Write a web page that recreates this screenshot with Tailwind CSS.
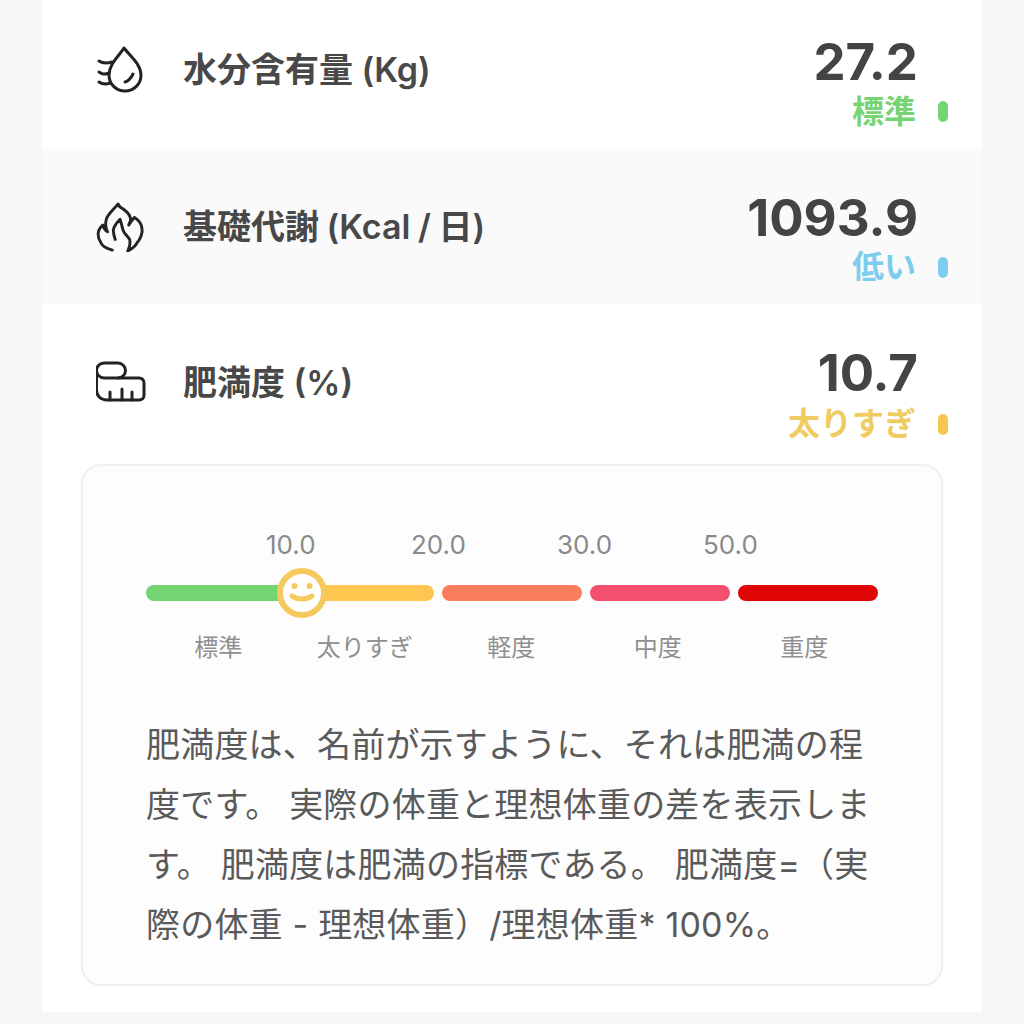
<!DOCTYPE html>
<html lang="ja">
<head>
<meta charset="utf-8">
<script src="https://cdn.jsdelivr.net/npm/@tailwindcss/browser@4"></script>
</head>
<body class="m-0 bg-[#f7f7f7]">
<div class="w-[1024px] h-[1024px] overflow-hidden bg-[#f7f7f7] px-[42px] font-['Inter','Noto_Sans_CJK_JP',sans-serif] text-[#484848]">
  <div class="w-[940px] h-[148px] bg-white flex justify-between pl-[54px] pr-[65px]">
    <div class="flex items-center gap-[37px] h-[140px]">
      <svg class="w-[50px] h-[50px]" viewBox="0 0 50 50" fill="none" stroke="#222" stroke-width="3" stroke-linecap="round" stroke-linejoin="round"><path d="M28 3 C23 11 13 19 13 30 C13 39 20 46 29 46 C38 46 45 39 45 30 C45 19 34 11 28 3Z"/><path d="M29 37 C33 36 35 33 37 29"/><path d="M3 16 C6 18 10 19 16 17 M3 27 C6 29 8 30 13 28 M3 37 C6 39 9 40 14 38"/></svg>
      <div class="text-[34px] font-semibold leading-none">水分含有量 (Kg)</div>
    </div>
    <div class="relative flex flex-col items-end pt-[33px]">
      <div class="text-[51px] font-bold leading-[58px] text-[#444444] -mr-[1px]">27.2</div>
      <div class="mt-[1px] mr-[1px] text-[32px] font-semibold leading-[40px] text-[#77d474]">標準</div>
      <span class="absolute -right-[31px] top-[101px] w-[10px] h-[21px] rounded-full bg-[#77d474]"></span>
    </div>
  </div>
  <div class="w-[940px] h-[156px] bg-[#fafafa] flex justify-between pl-[54px] pr-[65px]">
    <div class="flex items-center gap-[37px] h-[158px]">
      <svg class="w-[50px] h-[50px]" viewBox="0 0 50 52" fill="none" stroke="#222" stroke-width="3" stroke-linecap="round" stroke-linejoin="round"><path d="M16 50 C9 48 5 46 4 42 C1 38 1 34 1.500 31 C2 28 4 26 6 24 C7 27 9 30 11 31 C8 25 9 20 10 17 C12 12 18 7 22 2 C23 5 25 6 27 7 C31 10 35 14 35 18 C35 20 34 22 33 24 C35 21 37 18 39 16 C42 18 45 21 46 24 C47 27 47 29 47 31 C46 36 45 39 42 42 C40 46 36 49 32 51 C34 47 35 43 34 39 C32 35 28 33 27 29 C26 25 25 21 24 18 C21 21 18 25 17 29 C17 33 18 36 19 39"/></svg>
      <div class="text-[34px] font-semibold leading-none [word-spacing:-1px]">基礎代謝 (Kcal / 日)</div>
    </div>
    <div class="relative flex flex-col items-end pt-[41px]">
      <div class="text-[51px] font-bold leading-[58px] text-[#444444] -mr-[1px]">1093.9</div>
      <div class="mr-[1px] text-[32px] font-semibold leading-[40px] text-[#7ccdf0]">低い</div>
      <span class="absolute -right-[31px] top-[109px] w-[10px] h-[21px] rounded-full bg-[#7ccdf0]"></span>
    </div>
  </div>
  <div class="w-[940px] h-[708px] bg-white">
    <div class="flex justify-between pl-[54px] pr-[65px] h-[160px]">
      <div class="flex items-center gap-[37px] h-[158px]">
        <svg class="w-[50px] h-[50px]" viewBox="1 1 50 50" fill="none" stroke="#222" stroke-width="3" stroke-linecap="round" stroke-linejoin="round"><path d="M9 6 H23 A7.500 7.500 0 0 1 23 21 H9 A7.500 7.500 0 0 1 9 6Z"/><path d="M1.500 14 V33 C1.500 39 6 43 12 43 H44 C47 43 49 41 49 38 V26 C49 23 47 21 44 21 H23"/><path d="M15 43 V35 M27 43 V32 M37 43 V35"/></svg>
        <div class="text-[34px] font-semibold leading-none">肥満度 (%)</div>
      </div>
      <div class="relative flex flex-col items-end pt-[40px]">
        <div class="text-[51px] font-bold leading-[58px] text-[#444444] -mr-[1px]">10.7</div>
        <div class="mt-[2px] mr-[1px] text-[32px] font-semibold leading-[40px] text-[#f0cb62]">太りすぎ</div>
        <span class="absolute -right-[31px] top-[110px] w-[10px] h-[21px] rounded-full bg-[#f6c64f]"></span>
      </div>
    </div>
    <div class="mx-[39px] w-[862px] h-[522px] border-2 border-[#f0f0f0] rounded-[20px] bg-[#fdfdfd] pl-[63px] pt-[62px]">
      <div class="relative h-[34px] text-[26px] leading-[34px] text-[#8a8a8a]">
        <span class="absolute left-[120px]">10.0</span>
        <span class="absolute left-[265px]">20.0</span>
        <span class="absolute left-[411px]">30.0</span>
        <span class="absolute left-[557px]">50.0</span>
      </div>
      <div class="relative mt-[23px] h-[16px] grid grid-cols-5 gap-[8px] w-[732px]">
        <div class="rounded-full bg-[#74d471]"></div>
        <div class="rounded-full bg-[#fdc64f]"></div>
        <div class="rounded-full bg-[#fb7d5b]"></div>
        <div class="rounded-full bg-[#f2506e]"></div>
        <div class="rounded-full bg-[#e00505]"></div>
        <svg class="absolute left-[131px] -top-[17px] w-[50px] h-[50px]" viewBox="0 0 50 50"><circle cx="25" cy="25" r="22" fill="#fff" stroke="#f6c95e" stroke-width="6"/><circle cx="17.500" cy="18" r="3" fill="#f6c95e"/><circle cx="32.500" cy="18" r="3" fill="#f6c95e"/><path d="M15 28 C20 32 30 32 35 28" fill="none" stroke="#f6c95e" stroke-width="5" stroke-linecap="round"/></svg>
      </div>
      <div class="mt-[31px] -ml-[1px] grid grid-cols-[repeat(5,146.5px)] w-[733px] text-center text-[24px] leading-[32px] text-[#8f8f8f]">
        <div>標準</div><div>太りすぎ</div><div>軽度</div><div>中度</div><div>重度</div>
      </div>
      <p class="mt-[51px] w-[745px] text-[34px] leading-[60px] tracking-[0.2px] text-[#5a5a5a]">肥満度は、名前が示すように、それは肥満の程<br>度です。 実際の体重と理想体重の差を表示しま<br>す。 肥満度は肥満の指標である。 肥満度=（実<br>際の体重 - 理想体重）/理想体重* 100%。</p>
    </div>
  </div>
</div>
</body>
</html>
